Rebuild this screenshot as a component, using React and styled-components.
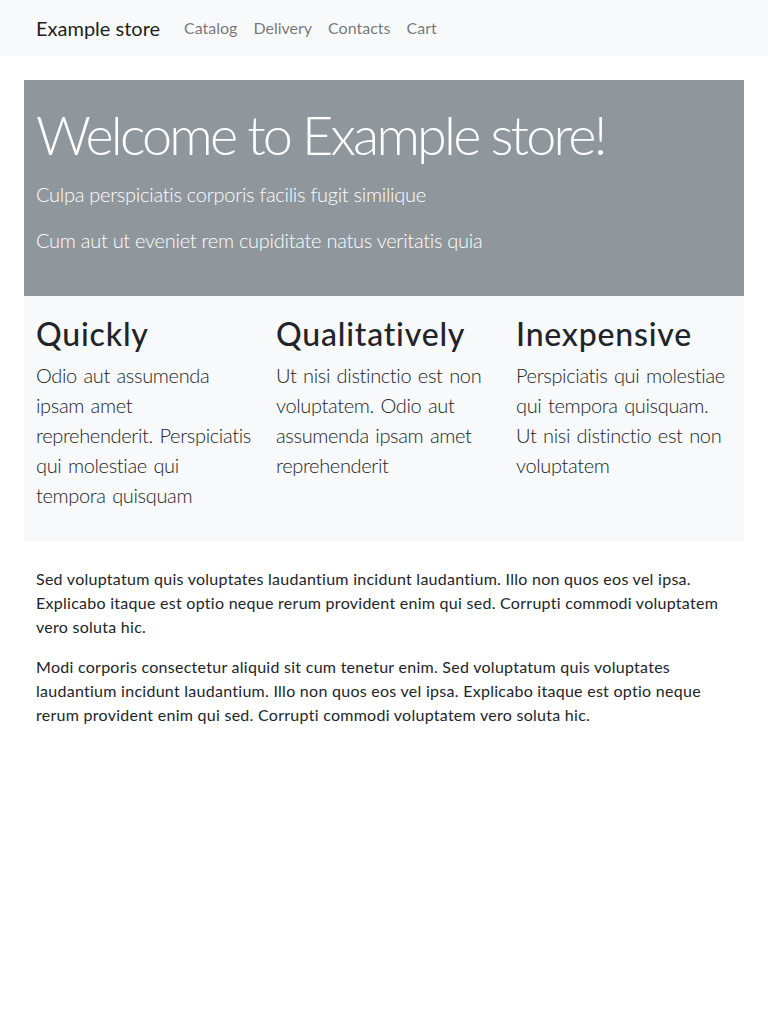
import React from "react";
import styled, { createGlobalStyle } from "styled-components";

const Global = createGlobalStyle`
  *, *::before, *::after { box-sizing: border-box; }
  html, body { margin: 0; padding: 0; background: #fff; }
  body {
    font-family: Lato, "Open Sans", sans-serif;
    font-size: 16px;
    line-height: 1.5;
    color: #212529;
    font-variant-ligatures: none;
  }
`;

const Navbar = styled.nav`
  background: #f8f9fa;
  padding: 8px 0;
`;

const Container = styled.div`
  max-width: 720px;
  margin: 0 auto;
  padding: 0 12px;
`;

const NavInner = styled(Container)`
  display: flex;
  align-items: center;
`;

const Brand = styled.a`
  font-size: 20px;
  line-height: 1.5;
  padding: 5px 0;
  margin-right: 16px;
  color: rgba(0, 0, 0, 0.9);
  text-decoration: none;
`;

const NavList = styled.ul`
  display: flex;
  list-style: none;
  margin: 0;
  padding: 0;
`;

const NavLink = styled.a`
  display: block;
  padding: 8px;
  font-size: 16px;
  color: rgba(0, 0, 0, 0.55);
  text-decoration: none;
`;

const Hero = styled.section`
  max-width: 720px;
  margin: 24px auto 0;
  padding: 21px 12px 25px;
  background: #8f969c;
  color: #fff;
`;

const HeroTitle = styled.h1`
  margin: 0 0 11px;
  font-size: 54px;
  font-weight: 300;
  line-height: 67px;
  letter-spacing: -2.8px;
  white-space: nowrap;
`;

const Lead = styled.p`
  margin: 0 0 16px;
  font-size: 20px;
  font-weight: 300;
  line-height: 1.5;
  letter-spacing: -0.27px;
`;

const Features = styled.section`
  max-width: 720px;
  margin: 0 auto;
  padding: 19px 0 15px;
  background: #f8f9fa;
  display: grid;
  grid-template-columns: repeat(3, 1fr);
`;

const Feature = styled.div`
  padding: 0 12px;
`;

const FeatureTitle = styled.h2`
  margin: 0 0 7px;
  font-size: 32px;
  font-weight: 500;
  line-height: 1.2;
  letter-spacing: 0.8px;
`;

const FeatureText = styled.p`
  margin: 0 0 16px;
  font-size: 20px;
  font-weight: 300;
  line-height: 1.5;
  letter-spacing: -0.35px;
  word-spacing: 1.5px;
`;

const Body = styled(Container)`
  margin-top: 26px;
`;

const Text = styled.p`
  margin: 0 0 16px;
  letter-spacing: 0.27px;
`;

const features = [
  {
    title: "Quickly",
    text: "Odio aut assumenda ipsam amet reprehenderit. Perspiciatis qui molestiae qui tempora quisquam",
  },
  {
    title: "Qualitatively",
    text: "Ut nisi distinctio est non voluptatem. Odio aut assumenda ipsam amet reprehenderit",
  },
  {
    title: "Inexpensive",
    text: "Perspiciatis qui molestiae qui tempora quisquam. Ut nisi distinctio est non voluptatem",
  },
];

export default function App() {
  return (
    <>
      <Global />
      <Navbar>
        <NavInner>
          <Brand href="#">Example store</Brand>
          <NavList>
            {["Catalog", "Delivery", "Contacts", "Cart"].map((l) => (
              <li key={l}>
                <NavLink href="#">{l}</NavLink>
              </li>
            ))}
          </NavList>
        </NavInner>
      </Navbar>
      <Hero>
        <HeroTitle>Welcome to Example store!</HeroTitle>
        <Lead>Culpa perspiciatis corporis facilis fugit similique</Lead>
        <Lead>Cum aut ut eveniet rem cupiditate natus veritatis quia</Lead>
      </Hero>
      <Features>
        {features.map((f) => (
          <Feature key={f.title}>
            <FeatureTitle>{f.title}</FeatureTitle>
            <FeatureText>{f.text}</FeatureText>
          </Feature>
        ))}
      </Features>
      <Body>
        <Text>
          Sed voluptatum quis voluptates laudantium incidunt laudantium. Illo non quos eos vel ipsa.
          Explicabo itaque est optio neque rerum provident enim qui sed. Corrupti commodi voluptatem
          vero soluta hic.
        </Text>
        <Text>
          Modi corporis consectetur aliquid sit cum tenetur enim. Sed voluptatum quis voluptates
          laudantium incidunt laudantium. Illo non quos eos vel ipsa. Explicabo itaque est optio neque
          rerum provident enim qui sed. Corrupti commodi voluptatem vero soluta hic.
        </Text>
      </Body>
    </>
  );
}
